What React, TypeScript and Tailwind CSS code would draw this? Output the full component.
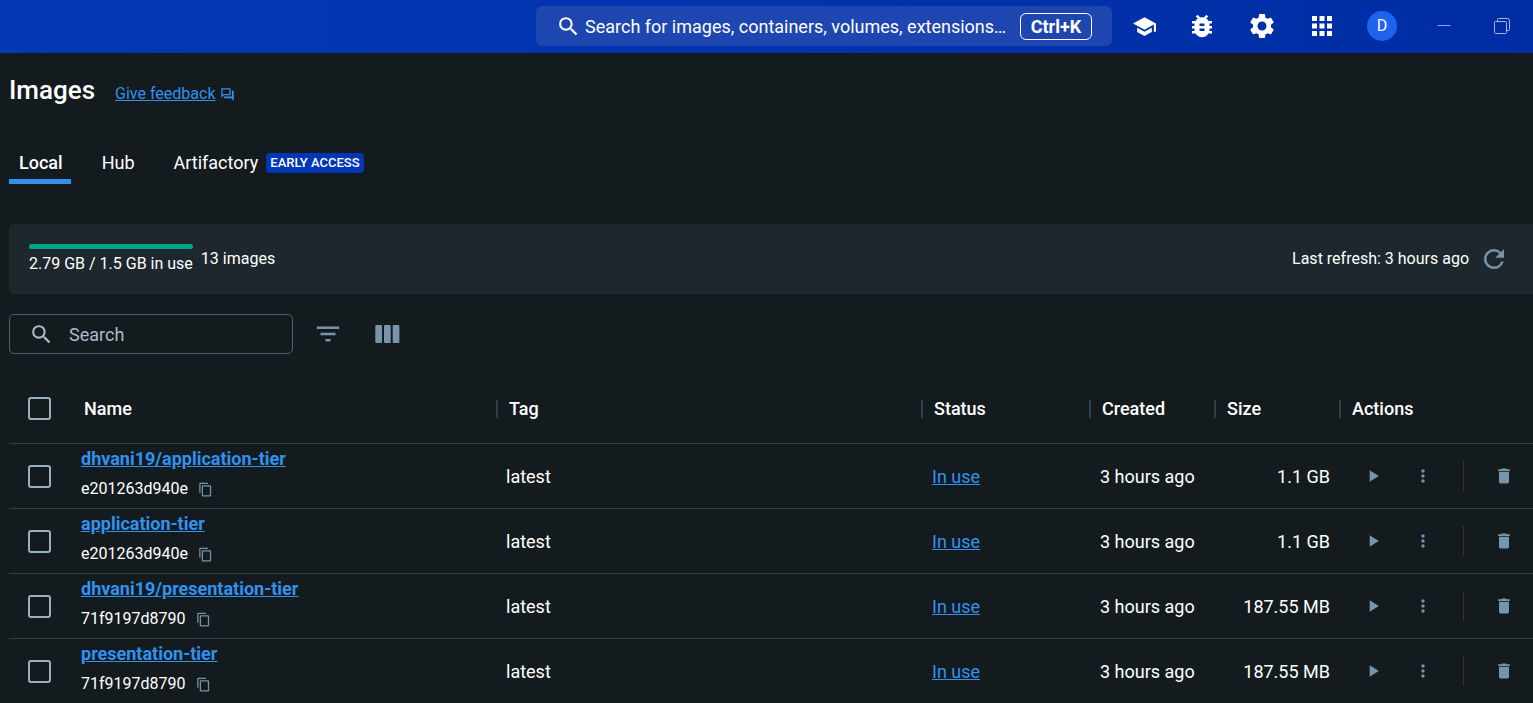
import React from "react";
import {
  MdApps,
  MdBugReport,
  MdContentCopy,
  MdDelete,
  MdFilterList,
  MdMoreVert,
  MdOutlineQuestionAnswer,
  MdPlayArrow,
  MdRefresh,
  MdSchool,
  MdSearch,
  MdSettings,
} from "react-icons/md";

type Image = { name: string; id: string; tag: string; created: string; size: string };

const images: Image[] = [
  { name: "dhvani19/application-tier", id: "e201263d940e", tag: "latest", created: "3 hours ago", size: "1.1 GB" },
  { name: "application-tier", id: "e201263d940e", tag: "latest", created: "3 hours ago", size: "1.1 GB" },
  { name: "dhvani19/presentation-tier", id: "71f9197d8790", tag: "latest", created: "3 hours ago", size: "187.55 MB" },
  { name: "presentation-tier", id: "71f9197d8790", tag: "latest", created: "3 hours ago", size: "187.55 MB" },
];

const columns = ["Tag", "Status", "Created", "Size", "Actions"];

function TopButton({ label, narrow, children }: { label: string; narrow?: boolean; children: React.ReactNode }) {
  return (
    <button aria-label={label} className={`flex h-10 items-center justify-center ${narrow ? "w-[55px]" : "w-[60px]"}`}>
      {children}
    </button>
  );
}

function TopBar() {
  return (
    <header className="flex h-[53px] items-center justify-end bg-linear-to-r from-[#0538b5] to-[#002da4] pr-[2px] pb-px">
      <div className="flex h-10 w-[576px] items-center rounded-md bg-[#1e46b1] pr-5 pl-5">
        <MdSearch size={25} aria-hidden />
        <input
          type="text"
          aria-label="Search for images, containers, volumes, extensions"
          placeholder="Search for images, containers, volumes, extensions…"
          className="ml-1 h-10 min-w-0 flex-1 bg-transparent text-lg text-white outline-none placeholder:text-white"
        />
        <kbd className="flex h-[27px] w-[72px] items-center justify-center rounded-md border border-white pt-px font-[Roboto,sans-serif] text-lg font-bold">
          Ctrl+K
        </kbd>
      </div>
      <nav aria-label="Tools" className="ml-[5px] flex items-center">
        <TopButton label="Learning center" narrow>
          <MdSchool size={25} />
        </TopButton>
        <TopButton label="Troubleshoot">
          <MdBugReport size={30} />
        </TopButton>
        <TopButton label="Settings">
          <MdSettings size={30} />
        </TopButton>
        <TopButton label="Apps">
          <MdApps size={30} />
        </TopButton>
        <TopButton label="Account">
          <span className="flex size-[30px] items-center justify-center rounded-full bg-[#1d63ed] text-base">D</span>
        </TopButton>
      </nav>
      <button aria-label="Minimize" className="ml-[3px] flex h-10 w-[58px] items-center justify-center text-[#8fa5dc]">
        <svg width="14" height="14" viewBox="0 0 14 14" aria-hidden>
          <path d="M0.5 6.5h13" stroke="currentColor" />
        </svg>
      </button>
      <button aria-label="Restore" className="flex h-10 w-[58px] items-center justify-center text-[#a3b5e2]">
        <svg width="16" height="16" viewBox="0 0 16 16" fill="none" stroke="currentColor" aria-hidden>
          <rect x="0.5" y="3.5" width="12" height="12" rx="1" />
          <path d="M3.5 3.5v-2a1 1 0 0 1 1-1h9a2 2 0 0 1 2 2v9a1 1 0 0 1-1 1h-2" />
        </svg>
      </button>
    </header>
  );
}

function Tabs() {
  return (
    <div role="tablist" className="mt-[33px] flex h-11 gap-[21px] text-lg">
      <button role="tab" aria-selected="true" className="border-b-[5px] border-[#3391ee] pt-[6px] pr-2 pl-[10px] font-medium">
        Local
      </button>
      <button role="tab" aria-selected="false" className="border-b-[5px] border-transparent pt-[6px] pr-2 pl-[10px]">
        Hub
      </button>
      <button role="tab" aria-selected="false" className="flex items-center gap-2 border-b-[5px] border-transparent pt-[6px] pr-2 pl-[10px]">
        Artifactory
        <span className="flex h-5 items-center rounded bg-[#0037b7] px-1 pt-px text-[13px] font-medium">EARLY ACCESS</span>
      </button>
    </div>
  );
}

function Summary() {
  return (
    <section className="mt-10 flex h-[70px] items-center rounded-l-[5px] bg-[#1d272d] pr-6 pl-5 text-base">
      <div className="flex flex-col">
        <div className="h-[5px] rounded-full bg-[#00a58c]" />
        <p className="mt-[5px] leading-5">2.79 GB / 1.5 GB in use</p>
      </div>
      <p className="ml-2 leading-5">13 images</p>
      <p className="ml-auto leading-5">Last refresh: 3 hours ago</p>
      <button aria-label="Refresh" className="ml-[10px] text-[#7794ab]">
        <MdRefresh size={30} />
      </button>
    </section>
  );
}

function Toolbar() {
  return (
    <div className="mt-5 flex items-center text-[#7794ab]">
      <div className="flex h-10 w-[284px] items-center rounded-[5px] border border-[#46627b] pr-3 pl-[19px]">
        <MdSearch size={25} className="shrink-0 text-[#aabbc8]" aria-hidden />
        <input
          type="text"
          aria-label="Search"
          placeholder="Search"
          className="ml-[15px] h-9 min-w-0 flex-1 bg-transparent text-lg text-white outline-none placeholder:text-[#aabbc8]"
        />
      </div>
      <button aria-label="Filter" className="ml-5">
        <MdFilterList size={30} />
      </button>
      <button aria-label="Columns" className="ml-[30px] flex h-[30px] items-center pl-[2px]">
        <svg width="25" height="18" viewBox="0 0 25 18" fill="currentColor" aria-hidden>
          <rect x="0.3" width="6.7" height="18" rx="1" />
          <rect x="9" width="6.7" height="18" rx="1" />
          <rect x="17.7" width="6.7" height="18" rx="1" />
        </svg>
      </button>
    </div>
  );
}

function Check({ label }: { label: string }) {
  return (
    <input
      type="checkbox"
      aria-label={label}
      className="ml-[19px] block size-[23px] appearance-none rounded-[3px] border-2 border-[#9bb0bf] checked:bg-[#3391ee]"
    />
  );
}

function ImageTable() {
  return (
    <table className="mt-5 w-full table-fixed border-separate border-spacing-0 text-left text-lg">
      <colgroup>
        <col className="w-[62px]" />
        <col />
        <col />
        <col className="w-[168px]" />
        <col className="w-[125px]" />
        <col className="w-[125px]" />
        <col className="w-[194px]" />
      </colgroup>
      <thead>
        <tr className="h-[69px]">
          <th className="p-0">
            <Check label="Select all images" />
          </th>
          <th className="py-0 pr-0 pl-[13px] font-medium">Name</th>
          {columns.map((c) => (
            <th key={c} className="p-0 font-medium">
              <div className="flex items-center gap-[11px]">
                <span className="h-[18px] w-[2px] bg-[#2c404e]" />
                {c}
              </div>
            </th>
          ))}
        </tr>
      </thead>
      <tbody>
        {images.map((image) => (
          <tr key={image.name} className="h-[65px] *:border-t *:border-[#2c404e]">
            <td className="p-0">
              <Check label={`Select ${image.name}`} />
            </td>
            <td className="px-[10px] py-0 align-top">
              <a href="#image" className="block leading-[30px] font-bold text-[#3391ee] underline">
                {image.name}
              </a>
              <div className="flex items-center gap-[10px] text-base leading-[30px]">
                {image.id}
                <button aria-label="Copy image ID" className="text-[#7794ab]">
                  <MdContentCopy size={15} />
                </button>
              </div>
            </td>
            <td className="px-[10px] pt-[2px] pb-0">{image.tag}</td>
            <td className="pt-[2px] pr-[9px] pb-0 pl-[11px]">
              <a href="#containers" className="text-[#3391ee] underline">
                In use
              </a>
            </td>
            <td className="pt-[2px] pr-[9px] pb-0 pl-[11px] whitespace-nowrap">{image.created}</td>
            <td className="pt-[2px] pr-[9px] pb-0 pl-[11px] text-right whitespace-nowrap">{image.size}</td>
            <td className="p-0">
              <div className="flex items-center pl-6 text-[#7794ab]">
                <button aria-label="Run">
                  <MdPlayArrow size={20} />
                </button>
                <button aria-label="More" className="ml-[30px]">
                  <MdMoreVert size={20} />
                </button>
                <span className="ml-[30px] h-[30px] w-px shrink-0 bg-[#2e3438]" />
                <button aria-label="Delete" className="ml-[30px]">
                  <MdDelete size={20} />
                </button>
              </div>
            </td>
          </tr>
        ))}
      </tbody>
    </table>
  );
}

export default function App() {
  return (
    <div className="min-h-screen bg-[#141b1f] font-[Roboto,sans-serif] text-white">
      <TopBar />
      <main className="pl-[9px]">
        <div className="flex items-center gap-5 pt-5">
          <h1 className="text-[26px] leading-[34px] font-medium">Images</h1>
          <a href="#feedback" className="mt-2 flex h-[26px] items-center gap-1 text-base text-[#3391ee]">
            <span className="underline">Give feedback</span>
            <MdOutlineQuestionAnswer size={15} aria-hidden />
          </a>
        </div>
        <Tabs />
        <Summary />
        <Toolbar />
        <ImageTable />
      </main>
    </div>
  );
}
